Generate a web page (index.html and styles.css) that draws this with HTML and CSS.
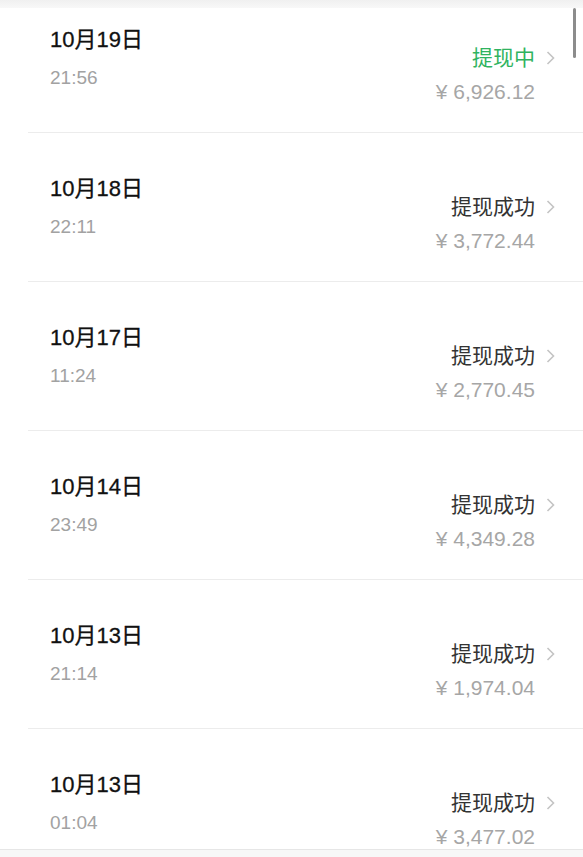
FILE: index.html
```html
<!DOCTYPE html>
<html lang="zh-CN">
<head>
  <meta charset="UTF-8">
  <meta name="viewport" content="width=device-width, initial-scale=1.0">
  <title>提现记录</title>
  <link rel="stylesheet" href="styles.css">
</head>
<body>

  <div class="top-bar"></div>

  <div class="list">
    <div class="row first">
      <div class="left">
        <div class="date">10月19日</div>
        <div class="time">21:56</div>
      </div>
      <div class="right">
        <div class="status pending">提现中 <svg class="arrow" viewBox="0 0 9 14"><polyline points="1.5,1 7.5,7 1.5,13"/></svg></div>
        <div class="amount">¥ 6,926.12</div>
      </div>
    </div>

    <div class="row">
      <div class="left">
        <div class="date">10月18日</div>
        <div class="time">22:11</div>
      </div>
      <div class="right">
        <div class="status">提现成功 <svg class="arrow" viewBox="0 0 9 14"><polyline points="1.5,1 7.5,7 1.5,13"/></svg></div>
        <div class="amount">¥ 3,772.44</div>
      </div>
    </div>

    <div class="row">
      <div class="left">
        <div class="date">10月17日</div>
        <div class="time">11:24</div>
      </div>
      <div class="right">
        <div class="status">提现成功 <svg class="arrow" viewBox="0 0 9 14"><polyline points="1.5,1 7.5,7 1.5,13"/></svg></div>
        <div class="amount">¥ 2,770.45</div>
      </div>
    </div>

    <div class="row">
      <div class="left">
        <div class="date">10月14日</div>
        <div class="time">23:49</div>
      </div>
      <div class="right">
        <div class="status">提现成功 <svg class="arrow" viewBox="0 0 9 14"><polyline points="1.5,1 7.5,7 1.5,13"/></svg></div>
        <div class="amount">¥ 4,349.28</div>
      </div>
    </div>

    <div class="row">
      <div class="left">
        <div class="date">10月13日</div>
        <div class="time">21:14</div>
      </div>
      <div class="right">
        <div class="status">提现成功 <svg class="arrow" viewBox="0 0 9 14"><polyline points="1.5,1 7.5,7 1.5,13"/></svg></div>
        <div class="amount">¥ 1,974.04</div>
      </div>
    </div>

    <div class="row">
      <div class="left">
        <div class="date">10月13日</div>
        <div class="time">01:04</div>
      </div>
      <div class="right">
        <div class="status">提现成功 <svg class="arrow" viewBox="0 0 9 14"><polyline points="1.5,1 7.5,7 1.5,13"/></svg></div>
        <div class="amount">¥ 3,477.02</div>
      </div>
    </div>
  </div>

  <div class="bottom-bar"></div>

  <div class="scrollbar"></div>

</body>
</html>
```

FILE: styles.css
```css
body {
  margin: 0;
  height: 857px;
  overflow: hidden;
  background: #fff;
  font-family: "Liberation Sans", "Noto Sans CJK SC", sans-serif;
  position: relative;
}
.top-bar {
  height: 8px;
  background: linear-gradient(#f0f0f0, #f8f8f8);
}
.list {
  height: 841px;
  overflow: hidden;
  padding-left: 28px;
}
.row {
  height: 148px;
  border-bottom: 1px solid #ececec;
  display: flex;
  justify-content: space-between;
}
.row.first {
  margin-top: -24px;
}
.left {
  padding-left: 22px;
  padding-top: 41px;
}
.date {
  font-size: 22px;
  line-height: 30px;
  color: #111;
  -webkit-text-stroke: 0.3px #111;
}
.time {
  font-size: 19px;
  line-height: 24px;
  margin-top: 11px;
  color: #a2a2a2;
}
.right {
  padding-top: 60px;
  padding-right: 28px;
  display: flex;
  flex-direction: column;
  align-items: flex-end;
}
.status {
  font-size: 21px;
  line-height: 28px;
  color: #333;
  display: flex;
  align-items: center;
  gap: 11px;
}
.status.pending {
  color: #2fb360;
}
.arrow {
  width: 9px;
  height: 14px;
  fill: none;
  stroke: #c4c4c4;
  stroke-width: 1.6;
}
.amount {
  font-size: 21px;
  line-height: 26px;
  margin-top: 7px;
  margin-right: 20px;
  color: #a6a6a6;
}
.bottom-bar {
  height: 8px;
  border-top: 1px solid #e6e6e6;
  background: #f7f7f7;
}
.scrollbar {
  position: absolute;
  top: 8px;
  right: 7px;
  width: 3px;
  height: 50px;
  border-radius: 2px;
  background: #8c8c8c;
}
```
